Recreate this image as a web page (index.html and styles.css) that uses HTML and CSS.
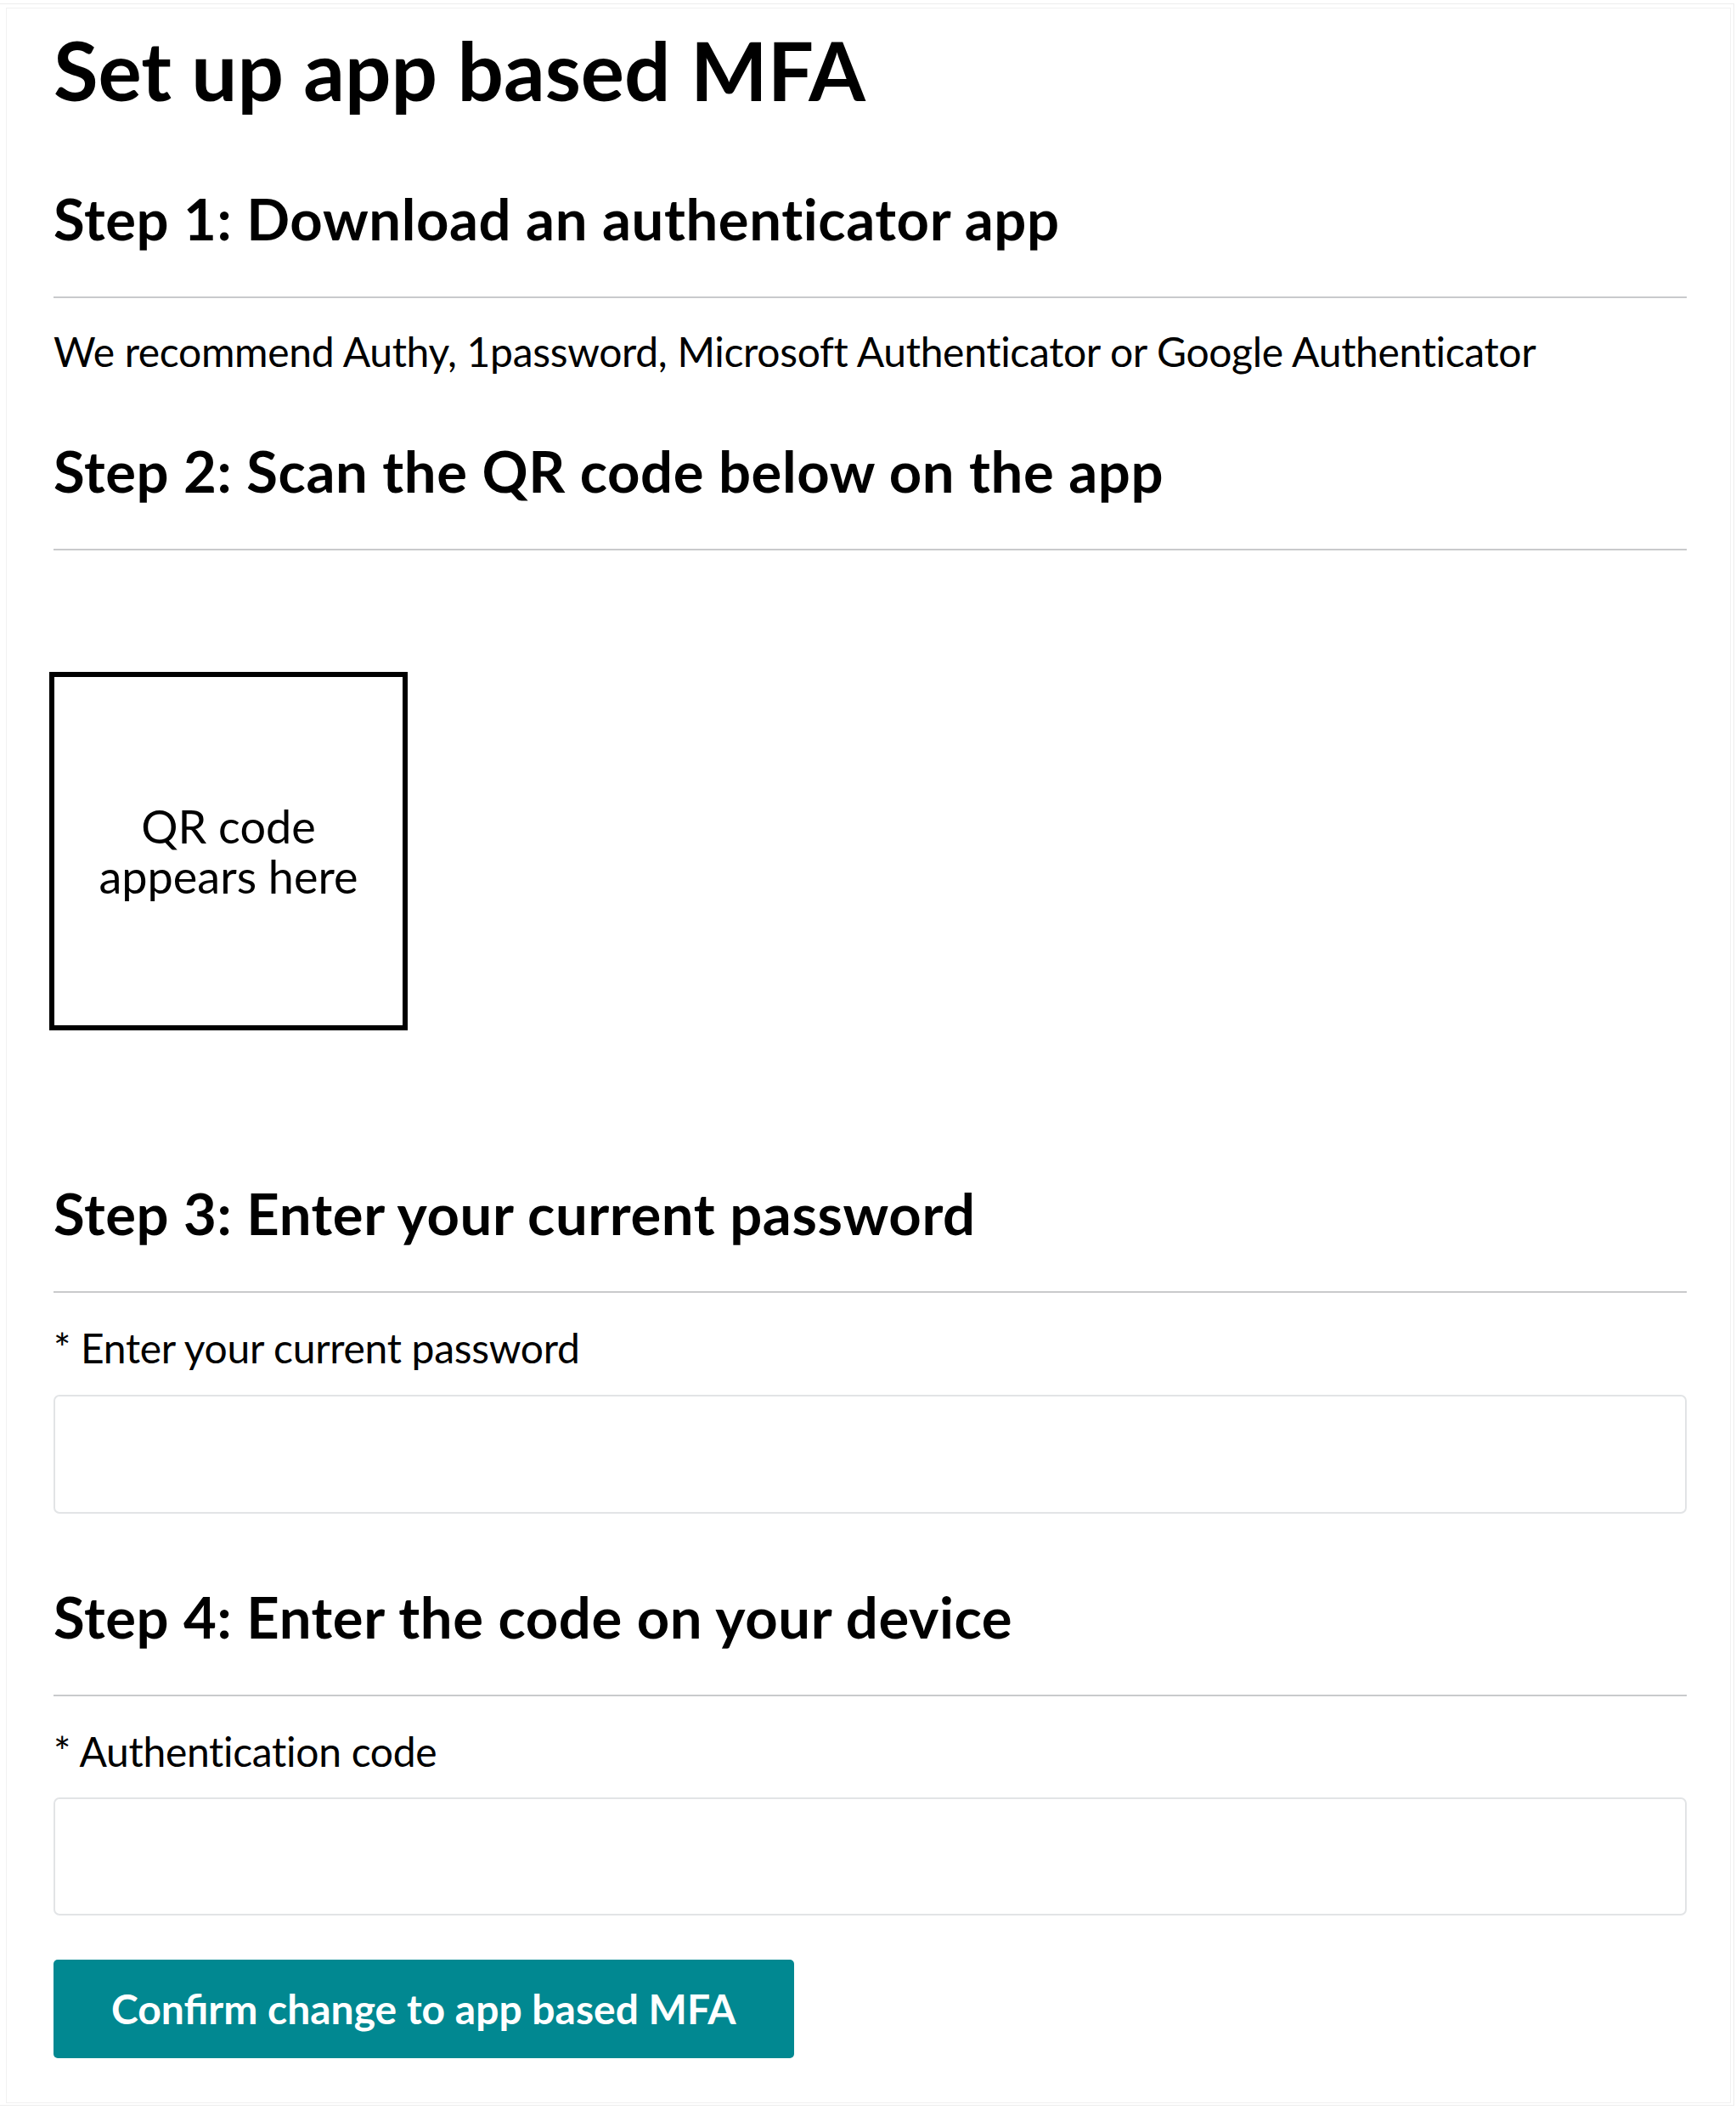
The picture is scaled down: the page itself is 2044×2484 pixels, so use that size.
FILE: index.html
```html
<!DOCTYPE html>
<html lang="en">
<head>
<meta charset="utf-8">
<title>Set up app based MFA</title>
<link rel="stylesheet" href="styles.css">
</head>
<body>
<div class="frame">
  <main class="card">
    <h1 class="title">Set up app based MFA</h1>

    <section class="step">
      <h2 class="step-title">Step 1: Download an authenticator app</h2>
      <p class="text">We recommend Authy, 1password, Microsoft Authenticator or Google Authenticator</p>
    </section>

    <section class="step">
      <h2 class="step-title">Step 2: Scan the QR code below on the app</h2>
      <div class="qr-box"><span class="qr-text">QR code<br>appears here</span></div>
    </section>

    <section class="step step-3">
      <h2 class="step-title">Step 3: Enter your current password</h2>
      <label class="label" for="pw">* Enter your current password</label>
      <input class="field" id="pw" type="password">
    </section>

    <section class="step step-4">
      <h2 class="step-title">Step 4: Enter the code on your device</h2>
      <label class="label" for="code">* Authentication code</label>
      <input class="field" id="code" type="text">
    </section>

    <button class="confirm" type="button">Confirm change to app based MFA</button>
  </main>
</div>
</body>
</html>
```

FILE: styles.css
```css
html, body {
  margin: 0;
  padding: 0;
  background: #ffffff;
}

body {
  font-family: Lato, "Noto Sans", "Liberation Sans", sans-serif;
  color: #000000;
}

.frame {
  margin: 4px 2px 3px 0;
  border-top: 1px solid #ededed;
  border-right: 1px solid #ededed;
  border-bottom: 1px solid #ededed;
  padding: 4px 3px 2px 7px;
}

.card {
  border: 1px solid #f1f1f1;
  padding: 14px 51px 52px 55px;
  display: flex;
  flex-direction: column;
  align-items: flex-start;
}

.title {
  margin: 0;
  font-size: 96px;
  line-height: 116px;
  font-weight: 700;
}

.step {
  align-self: stretch;
  display: flex;
  flex-direction: column;
  align-items: flex-start;
}

.step-title {
  align-self: stretch;
  margin: 77px 0 0 0;
  font-size: 67px;
  line-height: 80px;
  font-weight: 700;
  letter-spacing: 0.6px;
  padding-bottom: 52px;
  border-bottom: 2px solid #c9cacc;
}

.text {
  margin: 34px 0 0 0;
  font-size: 48px;
  line-height: 58px;
  font-weight: 400;
  letter-spacing: -0.32px;
}

.step:nth-of-type(2) .step-title {
  margin-top: 71px;
}

.qr-box {
  margin: 143px 0 0 -5px;
  width: 410px;
  height: 410px;
  border: 6px solid #000000;
  display: flex;
  align-items: center;
  justify-content: center;
  text-align: center;
}

.qr-text {
  font-size: 54px;
  line-height: 59px;
}

.step-3 .step-title {
  margin-top: 175px;
}

.step-4 .step-title {
  margin-top: 81px;
}

.label {
  margin-top: 36px;
  font-size: 48px;
  line-height: 58px;
  letter-spacing: -0.3px;
}

.field {
  align-self: stretch;
  box-sizing: border-box;
  margin: 26px 0 0 0;
  height: 140px;
  border: 2px solid #e2e4e6;
  border-radius: 7px;
  background: #ffffff;
  font: inherit;
  font-size: 48px;
  padding: 0 24px;
}

.step-4 .field {
  margin-top: 25px;
  height: 139px;
}

.confirm {
  margin-top: 52px;
  height: 116px;
  padding: 0 68px;
  border: none;
  border-radius: 5px;
  background: #018891;
  color: #ffffff;
  font-family: Lato, "Noto Sans", "Liberation Sans", sans-serif;
  font-size: 48px;
  font-weight: 700;
  line-height: 58px;
}
```
